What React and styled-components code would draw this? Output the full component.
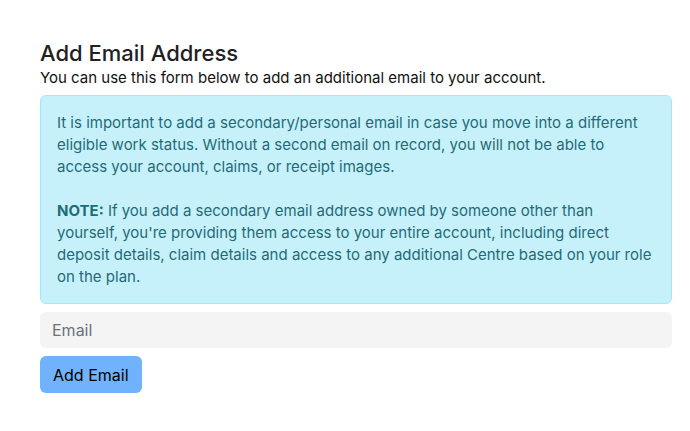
import React from "react";
import styled, { createGlobalStyle } from "styled-components";

const Global = createGlobalStyle`
  html, body { margin: 0; padding: 0; background: #ffffff; }
  body { font-family: Inter, "Noto Sans", sans-serif; -webkit-font-smoothing: antialiased; }
`;

const Page = styled.main`
  padding: 39px 18px 0 40px;
  width: 632px;
`;

const Title = styled.h2`
  margin: 0;
  font-size: 22px;
  line-height: 28px;
  font-weight: 500;
  color: #1f2124;
`;

const Lead = styled.p`
  margin: 0 0 6px;
  font-size: 15px;
  line-height: 22px;
  color: #111;
`;

const Alert = styled.div`
  box-sizing: border-box;
  background: #c7f1fa;
  border: 1px solid #a6e8f6;
  border-radius: 6px;
  padding: 16px 16px 15px;
  color: #1f6b79;
  font-size: 15px;
  line-height: 22px;
`;

const Para = styled.p`
  margin: 0;
  & + & { margin-top: 22px; }
`;

const Strong = styled.strong`
  font-weight: 700;
`;

const Input = styled.input`
  display: block;
  box-sizing: border-box;
  width: 100%;
  height: 36px;
  margin-top: 8px;
  border: none;
  border-radius: 6px;
  background: #f4f4f4;
  padding: 0 12px;
  font-family: inherit;
  font-size: 16px;
  color: #111;
  outline: none;
  &::placeholder { color: #6b7280; }
`;

const Button = styled.button`
  display: block;
  box-sizing: border-box;
  margin-top: 8px;
  height: 37px;
  padding: 0 13px;
  border: none;
  border-radius: 6px;
  background: #70b2fb;
  color: #000;
  font-family: inherit;
  font-size: 16px;
  cursor: pointer;
`;

export default function App() {
  return (
    <>
      <Global />
      <Page>
        <Title>Add Email Address</Title>
        <Lead>You can use this form below to add an additional email to your account.</Lead>
        <Alert>
          <Para>
            It is important to add a secondary/personal email in case you move into a different
            eligible work status. Without a second email on record, you will not be able to
            access your account, claims, or receipt images.
          </Para>
          <Para>
            <Strong>NOTE:</Strong> If you add a secondary email address owned by someone other than
            yourself, you're providing them access to your entire account, including direct
            deposit details, claim details and access to any additional Centre based on your role
            on the plan.
          </Para>
        </Alert>
        <Input type="email" placeholder="Email" />
        <Button type="button">Add Email</Button>
      </Page>
    </>
  );
}
